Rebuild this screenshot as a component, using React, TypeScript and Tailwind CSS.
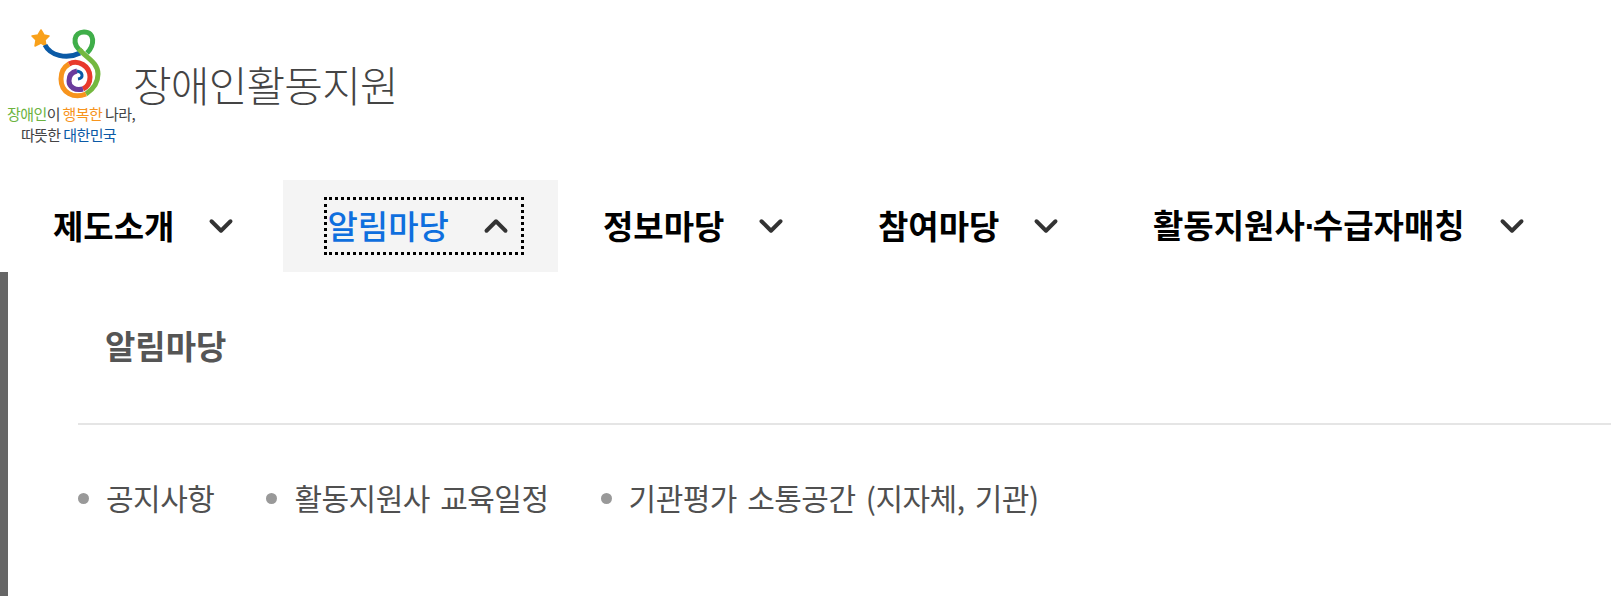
import type { ReactNode } from "react";
import { ChevronDown, ChevronUp } from "lucide-react";

const KR = "font-['Noto_Sans_CJK_KR','Noto_Sans',sans-serif]";

const Logo = () => (
  <div className="flex w-[136px] flex-col items-center">
    <svg width="72" height="74" viewBox="30 26 72 74" className="mr-[10px]">
      <polygon
        points="41,30 44,35 49,36 45,40 46,46 41,43 35,46 36,40 32,36 38,35"
        fill="#f9a11b"
        stroke="#f9a11b"
        strokeWidth="1.5"
        strokeLinejoin="round"
      />
      <path d="M45 45 C50 55 66 60 80 53" fill="none" stroke="#0b5aa6" strokeWidth="5" />
      <path d="M82 52 C71 44 74 32 84 32 C95 32 95 45 87 53" fill="none" stroke="#3fae49" strokeWidth="5" />
      <path d="M79 49 C86 58 98 62 98 74 C98 84 92 90 86 94" fill="none" stroke="#74b83f" strokeWidth="5" />
      <path d="M86 94 C74 99 61 93 61 79 C61 72 64 67 69 64" fill="none" stroke="#f7941d" strokeWidth="5" />
      <path d="M69 64 C78 59 90 66 90 77 C90 83 87 87 83 89" fill="none" stroke="#e8392b" strokeWidth="5" />
      <path d="M83 89 C75 91 69 87 69 81 C69 75 72 72 77 71" fill="none" stroke="#6a3a9c" strokeWidth="5" />
      <path d="M77 71 C83 72 84 78 78 79" fill="none" stroke="#0b5aa6" strokeWidth="3" />
    </svg>
    <div className={`${KR} mt-[3px] text-[15px] leading-[21px] tracking-[-0.6px] text-[#444] whitespace-nowrap text-center`}>
      <p>
        <span className="text-[#6cb33f]">장애인</span>이 <span className="text-[#f7941d]">행복한</span> 나라,
      </p>
      <p className="mr-[5px]">
        따뜻한 <span className="text-[#0b5aa6]">대한민국</span>
      </p>
    </div>
  </div>
);

const NavItem = ({ label, width }: { label: ReactNode; width: string }) => (
  <div className={`flex h-[92px] items-center gap-[28px] ${width}`}>
    <span className="text-[33px] font-bold text-black whitespace-nowrap">{label}</span>
    <ChevronDown size={38} strokeWidth={2.5} className="text-[#333]" />
  </div>
);

const Bullet = () => <span className="mt-[2px] h-[11px] w-[11px] rounded-full bg-[#999]" />;

export default function App() {
  return (
    <div className={`${KR} h-[596px] w-[1611px] overflow-hidden bg-white`}>
      <header className="flex h-[180px] items-start pt-[26px] pl-[3px]">
        <Logo />
        <h1 className="mt-[30px] -ml-[6px] text-[42px] font-light leading-[56px] tracking-[-0.8px] text-[#444] whitespace-nowrap">
          장애인활동지원
        </h1>
      </header>
      <nav className="flex h-[92px] items-center pl-[53px]">
        <NavItem label="제도소개" width="w-[230px]" />
        <div className="flex h-[92px] w-[275px] items-center justify-center bg-[#f4f4f4]">
          <div className="ml-[6px] flex h-[58px] w-[200px] items-center gap-[28px] border-[3px] border-dotted border-black pl-[1px]">
            <span className="text-[33px] font-medium text-[#0f6fde] whitespace-nowrap">알림마당</span>
            <ChevronUp size={38} strokeWidth={2.5} className="text-[#333]" />
          </div>
        </div>
        <div className="ml-[45px]">
          <NavItem label="정보마당" width="w-[275px]" />
        </div>
        <NavItem label="참여마당" width="w-[275px]" />
        <NavItem
          label={
            <>
              활동지원사<span className="font-['Liberation_Sans'] tracking-[-3px]">·</span>수급자매칭
            </>
          }
          width="w-[390px]"
        />
      </nav>
      <section className="h-[324px] border-l-8 border-[#666] pl-[70px]">
        <h2 className="flex h-[153px] items-start border-b-2 border-[#e5e5e5] pt-[53px] pl-[27px] text-[33px] font-bold leading-[40px] text-[#555]">
          알림마당
        </h2>
        <ul className="flex items-center pt-[52px] text-[30px] leading-[40px] tracking-[-0.5px] [word-spacing:4px] text-[#505050]">
          <li className="flex items-center gap-[17px]">
            <Bullet />
            공지사항
          </li>
          <li className="ml-[52px] flex items-center gap-[17px]">
            <Bullet />
            활동지원사 교육일정
          </li>
          <li className="ml-[52px] flex items-center gap-[17px]">
            <Bullet />
            기관평가 소통공간 (지자체, 기관)
          </li>
        </ul>
      </section>
    </div>
  );
}
